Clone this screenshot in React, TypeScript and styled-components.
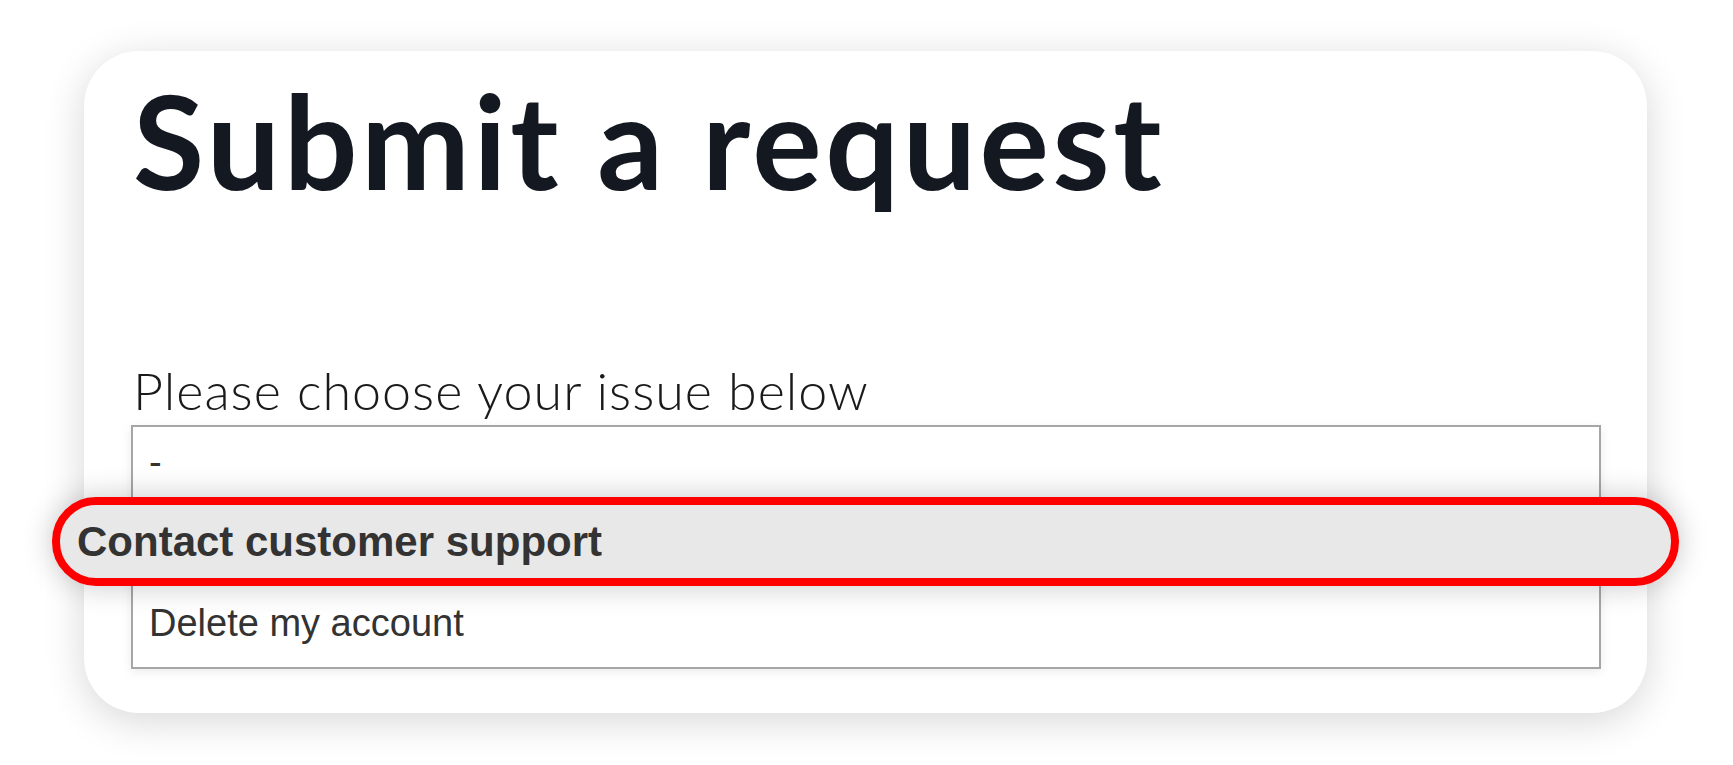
import React from "react";
import styled, { createGlobalStyle } from "styled-components";

const Global = createGlobalStyle`
  html, body { margin: 0; padding: 0; background: #ffffff; }
  body { font-family: "Lato", "Liberation Sans", sans-serif; }
  * { box-sizing: border-box; }
`;

const Page = styled.div`
  width: 1733px;
  height: 765px;
  padding: 51px 86px 0 84px;
  overflow: hidden;
`;

const Card = styled.section`
  width: 1563px;
  height: 662px;
  background: #ffffff;
  border-radius: 55px;
  box-shadow: 0 8px 40px rgba(0, 0, 0, 0.16);
  padding: 24px 46px 46px 47px;
  display: flex;
  flex-direction: column;
`;

const Title = styled.h1`
  margin: 0;
  font-family: "Lato", sans-serif;
  font-weight: 700;
  font-size: 130px;
  line-height: 1;
  letter-spacing: 3.6px;
  color: #141821;
  padding-left: 2px;
`;

const Label = styled.div`
  margin-top: 159px;
  font-family: "Lato", sans-serif;
  font-weight: 300;
  font-size: 52px;
  line-height: 1;
  letter-spacing: 1px;
  color: #1a1a1a;
  padding-left: 2px;
`;

const SelectList = styled.div`
  margin-top: 9px;
  width: 1470px;
  border: 2px solid #a6a6a6;
  background: #ffffff;
  box-shadow: 0 3px 10px rgba(0, 0, 0, 0.08);
  display: flex;
  flex-direction: column;
`;

const Option = styled.div<{ $highlight?: boolean; $lift?: number }>`
  height: ${(p) => (p.$highlight ? "89px" : "81px")};
  display: flex;
  align-items: center;
  font-family: "Liberation Sans", Arial, sans-serif;
  color: #333333;
  font-size: ${(p) => (p.$highlight ? "42px" : "38px")};
  font-weight: ${(p) => (p.$highlight ? 700 : 400)};
  padding-left: ${(p) => (p.$highlight ? "17px" : "16px")};
  padding-bottom: ${(p) => p.$lift ?? 0}px;
  ${(p) =>
    p.$highlight &&
    `
    position: relative;
    margin: -11px -80px 0 -81px;
    background: #e8e8e8;
    border: 8px solid #ff0000;
    border-radius: 44px;
    box-shadow: 0 0 30px rgba(0, 0, 0, 0.22);
  `}
`;

export default function App() {
  return (
    <>
      <Global />
      <Page>
        <Card>
          <Title>Submit a request</Title>
          <Label>Please choose your issue below</Label>
          <SelectList>
            <Option $lift={10}>-</Option>
            <Option $highlight>Contact customer support</Option>
            <Option $lift={7}>Delete my account</Option>
          </SelectList>
        </Card>
      </Page>
    </>
  );
}
